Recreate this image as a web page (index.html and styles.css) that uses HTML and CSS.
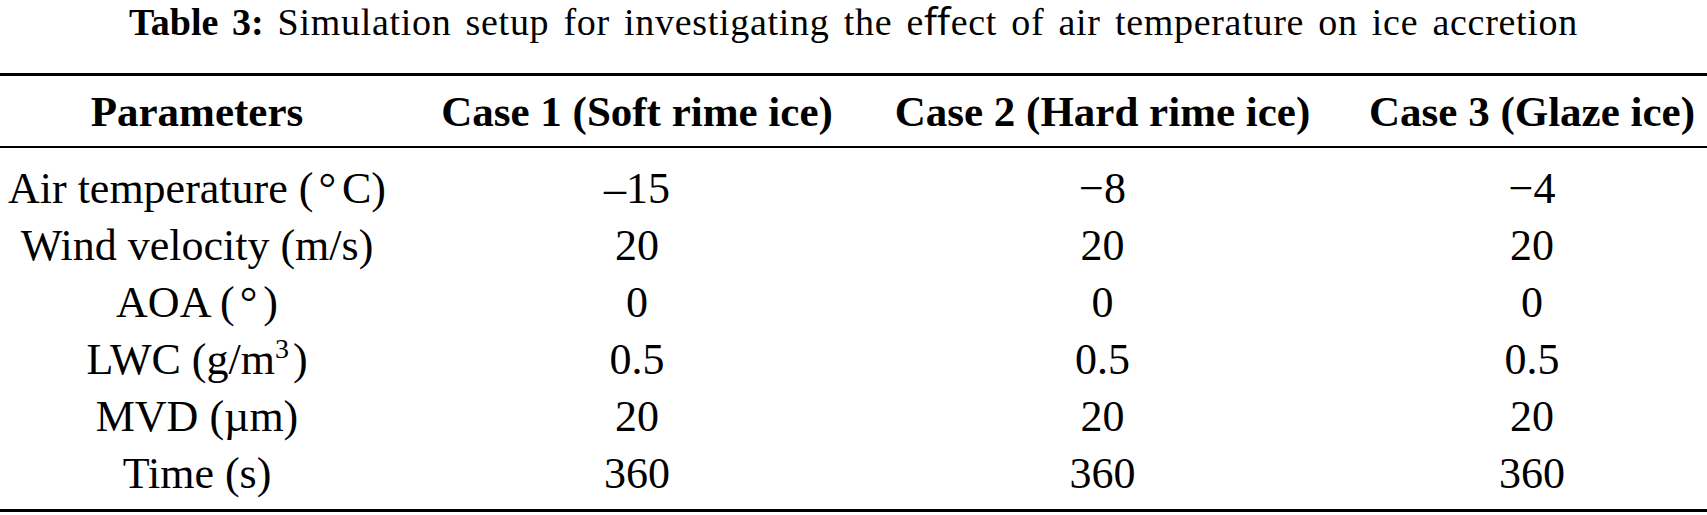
FILE: index.html
```html
<!DOCTYPE html>
<html lang="en">
<head>
    <meta charset="UTF-8">
    <meta name="viewport" content="width=device-width, initial-scale=1.0">
    <title>Table 3</title>
    <link rel="stylesheet" href="styles.css">
</head>
<body>
    <div class="caption"><b class="label">Table 3:</b>Simulation setup for investigating the eﬀect of air temperature on ice accretion</div>

    <table class="setup">
        <colgroup>
            <col class="c0">
            <col class="c1">
            <col class="c2">
            <col class="c3">
        </colgroup>
        <thead>
            <tr>
                <th>Parameters</th>
                <th>Case 1 (Soft rime ice)</th>
                <th class="pad2">Case 2 (Hard rime ice)</th>
                <th>Case 3 (Glaze ice)</th>
            </tr>
        </thead>
        <tbody>
            <tr class="first">
                <td>Air temperature (<span class="deg">°</span>C)</td>
                <td>–15</td>
                <td class="pad2">−8</td>
                <td>−4</td>
            </tr>
            <tr>
                <td>Wind velocity (m/s)</td>
                <td>20</td>
                <td class="pad2">20</td>
                <td>20</td>
            </tr>
            <tr>
                <td>AOA (<span class="deg">°</span>)</td>
                <td>0</td>
                <td class="pad2">0</td>
                <td>0</td>
            </tr>
            <tr>
                <td>LWC (g/m<sup>3</sup>)</td>
                <td>0.5</td>
                <td class="pad2">0.5</td>
                <td>0.5</td>
            </tr>
            <tr>
                <td>MVD (µm)</td>
                <td>20</td>
                <td class="pad2">20</td>
                <td>20</td>
            </tr>
            <tr class="last">
                <td>Time (s)</td>
                <td>360</td>
                <td class="pad2">360</td>
                <td>360</td>
            </tr>
        </tbody>
    </table>
</body>
</html>
```

FILE: styles.css
```css
body {
    margin: 0;
    background-color: #ffffff;
    color: #000000;
    font-family: "Liberation Serif", "Times New Roman", serif;
}

/* caption line above the table */
.caption {
    font-size: 38px;
    line-height: 44px;
    letter-spacing: 0.7px;
    word-spacing: 4px;
    text-align: center;
}
.caption .label {
    margin-right: 14px;
    letter-spacing: 0;
}

.setup {
    width: 1707px;
    margin-top: 29px;
    table-layout: fixed;
    border-collapse: separate;
    border-spacing: 0;
}

.c0 { width: 394px; }
.c1 { width: 486px; }
.c2 { width: 477px; }
.c3 { width: 350px; }

.setup th,
.setup td {
    padding: 0;
    text-align: center;
    white-space: nowrap;
    line-height: 57px;
}

.setup th {
    font-size: 43px;
    font-weight: bold;
    padding-top: 7px;
    padding-bottom: 6px;
    border-top: 3px solid #000000;
    border-bottom: 2px solid #000000;
}

.setup td {
    font-size: 44px;
}

/* column 2 sits a little left of its cell */
.setup .pad2 {
    padding-right: 32px;
}

.setup tr.first td {
    padding-top: 12px;
}
.setup tr.last td {
    padding-bottom: 7px;
    border-bottom: 3px solid #000000;
}

.deg {
    margin: 0 6px 0 5px;
}

sup {
    font-size: 28px;
    line-height: 0;
    vertical-align: 16px;
    margin-right: 4px;
}
```
